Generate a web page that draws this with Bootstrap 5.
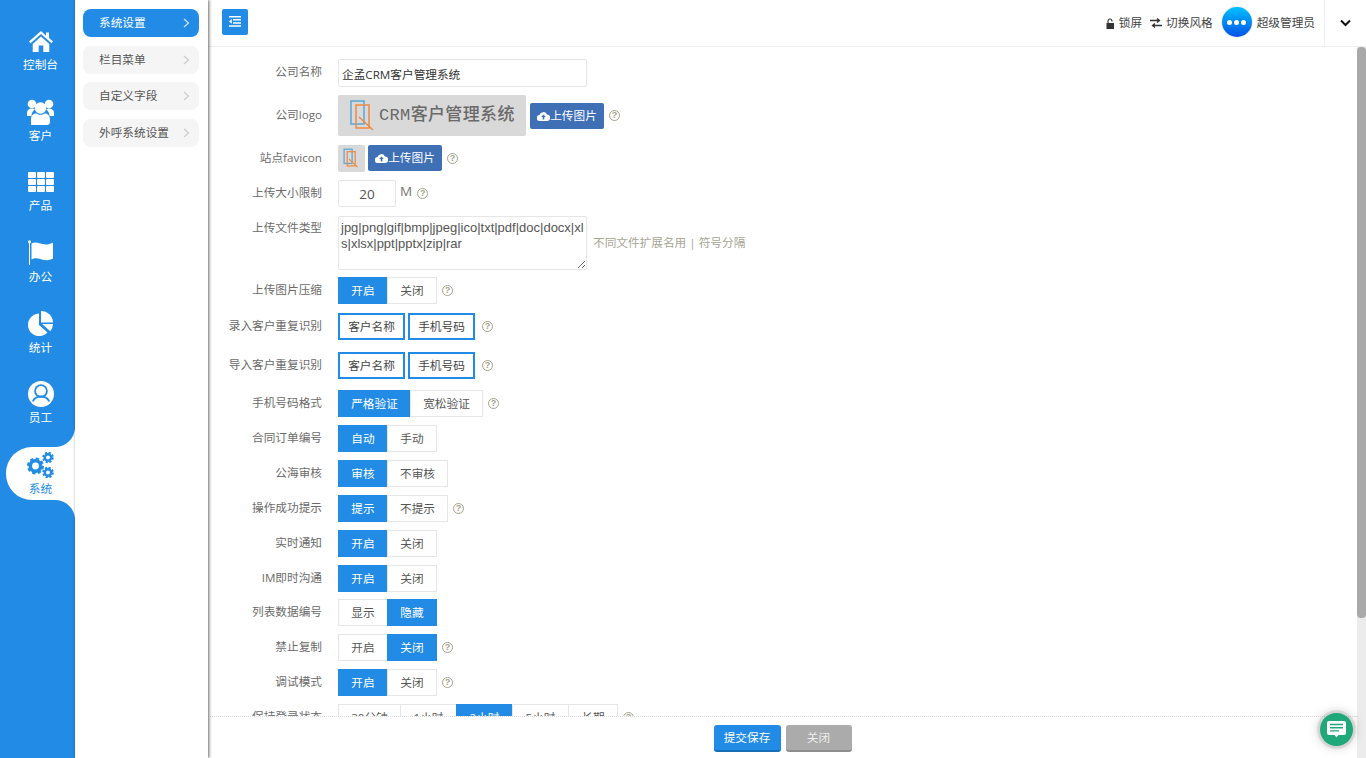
<!DOCTYPE html>
<html lang="zh-CN">
<head>
<meta charset="utf-8">
<title>系统设置</title>
<link href="https://cdn.jsdelivr.net/npm/bootstrap@5.3.0/dist/css/bootstrap.min.css" rel="stylesheet">
<style>
html,body{height:100%;margin:0;overflow:hidden}
body{font-family:"Open Sans","Noto Sans CJK SC",sans-serif;font-size:11.67px;color:#555;background:#fff}
.shell{height:758px}
.rail{width:75px;flex:none;background:#228be6;padding-top:25px}
.rail-item{position:relative;height:50px;margin-bottom:20.67px;margin-left:6px;color:#fff;text-decoration:none;line-height:16px}
.rail-item svg{display:block;fill:#fff}
.rail-ico{height:32px}
.rail-on{background:#fff;color:#228be6;border-radius:26px 0 0 26px;margin-top:-2px;padding-top:2px;height:53px;margin-bottom:0}
.rail-on svg{fill:#228be6}
.rail-on::before,.rail-on::after{content:"";position:absolute;right:0;width:20px;height:20px}
.rail-on::before{top:-20px;background:radial-gradient(circle at 0 0,#228be6 19.5px,#fff 20.5px)}
.rail-on::after{bottom:-20px;background:radial-gradient(circle at 0 100%,#228be6 19.5px,#fff 20.5px)}
.sub{width:133px;flex:none;background:#fff;padding:9px 9px 0 8px;box-shadow:1px 0 3px rgba(0,0,0,.6);position:relative;z-index:3}
.sub-item{height:28px;margin-bottom:8.5px;border-radius:8px;background:#f5f5f5;color:#555;padding:0 9px 0 16px;text-decoration:none}
.sub-on{background:#228be6;color:#fff}
.work{min-width:0;position:relative}
.topbar{height:47px;flex:none;border-bottom:1px solid #eee;padding-left:14px;color:#444}
.tog{width:26px;height:26px;background:#228be6;border-radius:2px;margin-bottom:3px}
.who{width:30px;height:30px;border-radius:50%;background:linear-gradient(#00c0ff,#0052e8);box-shadow:0 0 2px rgba(0,0,0,.25);margin:0 0 2px 9px;gap:2px}
.who i{width:5px;height:5px;border-radius:50%;background:#fff;display:block}
.who-name{margin:0 9px 0 5px}
.swap{margin:0 4px 0 8px}
.lock{margin-right:4px}
.caret-cell{width:42px;height:46px;border-left:1px solid #f0f0f0}
.body-wrap{flex:1;min-height:0}
.scroller{overflow:hidden;flex:1;min-width:0;padding-top:12px}
.sbar{width:9px;flex:none;background:#ececec}
.sthumb{height:571px;background:#a9a9a9;border-radius:4px}
.frm{height:790px}
.frow{margin-bottom:8px}
.m7{margin-bottom:7px}.m9{margin-bottom:9px}.m11{margin-bottom:11px}.m12{margin-bottom:12px}
.lab{width:114px;flex:none;text-align:right;margin-right:16px;color:#6b6b6b;position:relative;top:-1px;white-space:nowrap}
.lab-top{align-self:flex-start;top:3px}
.fld{border:1px solid #e6e6e6;border-radius:2px;height:28px;font-size:11.67px;color:#333;padding:0 3px;background:#fff;outline:none;font-family:inherit}
.fld-name{width:249px}
.fld-num{width:58px;height:27px;text-align:center;font-size:13.5px;color:#555}
.fld-area{width:249px;height:54px;padding:3px 2px;line-height:16px;font-family:"Liberation Sans",sans-serif;font-size:13px;resize:vertical;word-break:break-all;color:#555;display:block}
.unit{font-size:13.5px;color:#777;margin-left:4px;position:relative;top:-2px}
.tip{width:11px;height:11px;border:1px solid #a3a38c;border-radius:50%;color:#a3a38c;font-size:9px;line-height:9px;text-align:center;flex:none;margin-left:5px;font-family:"Liberation Sans",sans-serif;font-weight:700}
.tip-chk{margin-left:4px}
.hint{color:#a5a594;margin-left:6px}
.logo-box{width:188px;height:41px;background:#d9d9d9;border-radius:2px;color:#6a6a6a;font-weight:500;font-size:17px;letter-spacing:.35px;padding-left:12px;font-family:"Liberation Mono","Noto Sans CJK SC",monospace}
.logo-ico{margin-right:3px;flex:none}
.fav-box{width:27px;height:27px;background:#d9d9d9;border-radius:2px}
.up{background:#3f70b6;color:#fff;border-radius:2px;height:26px;width:74px;font-size:11.67px;margin-left:4px;padding:0;border:0}
.up-fav{margin-left:3px;margin-bottom:1px}
.seg{height:27px;font-size:11.67px;line-height:25px;border:1px solid #e6e6e6;border-radius:0!important;color:#555;background:#fff;flex:none!important;padding:0}
.seg-on{background:#228be6;border-color:#228be6;color:#fff}
.seg:hover{background:#fff;color:#555;border-color:#e6e6e6}
.seg-on:hover{background:#228be6;color:#fff;border-color:#228be6}
.w50{width:50px}.w61{width:61px}.w73{width:73px}.w63{width:63px}.w57{width:57px}
.chk{height:27px;width:67px;line-height:23px;border:2px solid #228be6;color:#444;background:#fff;text-align:center;margin-right:3px}
.foot{position:absolute;left:2px;right:11px;bottom:0;height:42px;background:#fff;border-top:1px dotted #ddd;z-index:2;gap:5px;padding-top:2px}
.foot-line{position:absolute;right:-2px;top:-1px;width:2px;border-top:1px dotted #ddd}
.act{height:27px;width:67px;padding:0;font-size:11.67px;line-height:24px;border:0;border-bottom:2px solid #176fb8;background:#228be6;color:#fff;border-radius:3px}
.act-off{width:66px;background:#ababab;border-bottom-color:#8e8e8e;color:#eee}
.chat{position:fixed;left:1320px;top:713px;width:33px;height:33px;border-radius:50%;background:#1fa97a;box-shadow:0 0 0 3px rgba(0,0,0,.08),0 0 12px rgba(0,0,0,.28);z-index:5}
</style>
</head>
<body>
<div class="shell d-flex">
  <nav class="rail d-flex flex-column">
    <a class="rail-item d-flex flex-column align-items-center" href="#"><div class="rail-ico d-flex align-items-center"><svg width="24" height="21" viewBox="0 0 24 21"><path d="M12 0 0 10.600l1.500 1.700L12 3l10.500 9.300 1.500-1.700-4-3.500V1.500h-3v3.300z"/><path d="M3.700 13 12 5.500l8.300 7.500v8h-6v-6.500H9.700V21h-6z"/></svg></div>控制台</a>
    <a class="rail-item d-flex flex-column align-items-center" href="#"><div class="rail-ico d-flex align-items-center"><svg width="27" height="26" viewBox="0 0 27 26"><circle cx="5" cy="5" r="4.300"/><circle cx="22" cy="5" r="4.300"/><path d="M0 17v-3c0-3 2-4.500 5-4.500 1.200 0 2 .3 2.800 1-2 1.500-3.300 3.500-3.300 6.500zM27 17v-3c0-3-2-4.500-5-4.500-1.200 0-2 .3-2.800 1 2 1.500 3.300 3.500 3.300 6.500z"/><circle cx="13.500" cy="9" r="5.800"/><path d="M4 26v-6c0-3.500 2.500-5.500 5.500-5.500 1.200 1 2.500 1.300 4 1.300s2.800-.3 4-1.300c3 0 5.500 2 5.500 5.500v3c0 2-1 3-3 3z"/></svg></div>客户</a>
    <a class="rail-item d-flex flex-column align-items-center" href="#"><div class="rail-ico d-flex align-items-center"><svg width="26" height="20" viewBox="0 0 26 20"><rect width="8" height="6" rx="1"/><rect x="9" width="8" height="6" rx="1"/><rect x="18" width="8" height="6" rx="1"/><rect y="7" width="8" height="6" rx="1"/><rect x="9" y="7" width="8" height="6" rx="1"/><rect x="18" y="7" width="8" height="6" rx="1"/><rect y="14" width="8" height="6" rx="1"/><rect x="9" y="14" width="8" height="6" rx="1"/><rect x="18" y="14" width="8" height="6" rx="1"/></svg></div>产品</a>
    <a class="rail-item d-flex flex-column align-items-center" href="#"><div class="rail-ico d-flex align-items-center"><svg width="25" height="25" viewBox="0 0 25 25"><circle cx="1.500" cy="1.800" r="1.500"/><rect x="1" y="2" width="1" height="23"/><path d="M3.500 3.500C10 0 15 8 25 2.500v16C16 23.500 10 15 3.500 19.500z"/></svg></div>办公</a>
    <a class="rail-item d-flex flex-column align-items-center" href="#"><div class="rail-ico d-flex align-items-center"><svg width="25" height="25" viewBox="0 0 25 25"><path d="M11 2.500A11.300 11.300 0 1 0 19.500 21.500L11 14z"/><path d="M13 0a11.800 11.800 0 0 1 12 11.500H13z"/><path d="M14.200 13H25a12 12 0 0 1-2.700 7.300z"/></svg></div>统计</a>
    <a class="rail-item d-flex flex-column align-items-center" href="#"><div class="rail-ico d-flex align-items-center"><svg width="26" height="26" viewBox="0 0 26 26"><circle cx="13" cy="13" r="13"/><circle cx="13" cy="10" r="6.800" fill="#228be6"/><circle cx="13" cy="10" r="5"/><path d="M4.800 20.500c1.500-3.500 4.500-5 8.200-5s6.700 1.500 8.200 5" fill="none" stroke="#228be6" stroke-width="1.800"/></svg></div>员工</a>
    <a class="rail-item rail-on d-flex flex-column align-items-center" href="#"><div class="rail-ico d-flex align-items-center"><svg width="27" height="26" viewBox="0 0 27 26"><g fill="none" stroke="#228be6"><circle cx="8.500" cy="14" r="5.200" stroke-width="3.600"/><circle cx="8.500" cy="14" r="7.200" stroke-width="2.600" stroke-dasharray="3.300 2.350"/><circle cx="21" cy="5.500" r="3.200" stroke-width="2.400"/><circle cx="21" cy="5.500" r="4.800" stroke-width="2" stroke-dasharray="2.200 1.570"/><circle cx="21" cy="20.500" r="3.200" stroke-width="2.400"/><circle cx="21" cy="20.500" r="4.800" stroke-width="2" stroke-dasharray="2.200 1.570"/></g></svg></div>系统</a>
  </nav>

  <aside class="sub d-flex flex-column">
    <a class="sub-item sub-on d-flex align-items-center justify-content-between" href="#">系统设置<svg width="7" height="10" viewBox="0 0 7 10"><path d="M1 1l4.500 4L1 9" fill="none" stroke="#d5e8fa" stroke-width="1.200"/></svg></a>
    <a class="sub-item d-flex align-items-center justify-content-between" href="#">栏目菜单<svg width="7" height="10" viewBox="0 0 7 10"><path d="M1 1l4.500 4L1 9" fill="none" stroke="#ccc" stroke-width="1.200"/></svg></a>
    <a class="sub-item d-flex align-items-center justify-content-between" href="#">自定义字段<svg width="7" height="10" viewBox="0 0 7 10"><path d="M1 1l4.500 4L1 9" fill="none" stroke="#ccc" stroke-width="1.200"/></svg></a>
    <a class="sub-item d-flex align-items-center justify-content-between" href="#">外呼系统设置<svg width="7" height="10" viewBox="0 0 7 10"><path d="M1 1l4.500 4L1 9" fill="none" stroke="#ccc" stroke-width="1.200"/></svg></a>
  </aside>

  <main class="work flex-grow-1 d-flex flex-column">
    <header class="topbar d-flex align-items-center justify-content-between">
      <button class="tog btn p-0 d-flex align-items-center justify-content-center" type="button"><svg width="14" height="11" viewBox="0 0 14 11"><path d="M1 0h12v1.500H1zM5 3h8v1.500H5zM5 6.200h8v1.500H5zM1 9.300h12v1.500H1zM3.800 3.100v4.600L1 5.400z" fill="#fff"/></svg></button>
      <div class="d-flex align-items-center">
        <svg width="9" height="11" viewBox="0 0 9 11" class="lock"><path d="M1.500 5V3a2.500 2.500 0 0 1 5 0v.5H5.400V3a1.400 1.400 0 0 0-2.800 0v2z M.5 5H8v6H.5z" fill="#333"/></svg>
        <span>锁屏</span>
        <svg width="12" height="10" viewBox="0 0 12 10" class="swap"><path d="M0 2.500h9M7 .5l2.500 2-2.500 2M12 7.500H3M5 5.500l-2.500 2 2.500 2" fill="none" stroke="#333" stroke-width="1.300"/></svg>
        <span>切换风格</span>
        <div class="who d-flex align-items-center justify-content-center"><i></i><i></i><i></i></div>
        <span class="who-name">超级管理员</span>
        <div class="caret-cell d-flex align-items-center justify-content-center"><svg width="11" height="8" viewBox="0 0 11 8"><path d="M1 1.500l4.500 4.500L10 1.500" fill="none" stroke="#111" stroke-width="2"/></svg></div>
      </div>
    </header>

    <div class="body-wrap d-flex">
    <div class="scroller">
      <form class="frm">
        <div class="frow d-flex align-items-center"><label class="lab">公司名称</label><input class="fld fld-name" value="企孟CRM客户管理系统"></div>
        <div class="frow d-flex align-items-center m9"><label class="lab">公司logo</label>
          <div class="logo-box d-flex align-items-center"><svg width="26" height="34" viewBox="0 0 26 34" class="logo-ico"><rect x="1" y="2" width="13" height="23" fill="none" stroke="#5aa6d6" stroke-width="1.500"/><rect x="6" y="6" width="13" height="23" fill="none" stroke="#ee8a45" stroke-width="1.500"/><path d="M9 18l14 13" stroke="#ee8a45" stroke-width="1.500"/></svg><span>CRM客户管理系统</span></div>
          <button class="up btn d-flex align-items-center justify-content-center" type="button"><svg width="13" height="10" viewBox="0 0 13 10"><path d="M3 10a3 3 0 0 1-.5-6A4 4 0 0 1 10 3.500 3.200 3.200 0 0 1 10 10z" fill="#fff"/><path d="M6.500 3.500 4.200 6H5.700v2.500h1.600V6h1.500z" fill="#3f70b6"/></svg>上传图片</button><span class="tip">?</span></div>
        <div class="frow d-flex align-items-center"><label class="lab">站点favicon</label>
          <div class="fav-box d-flex align-items-center justify-content-center"><svg width="17" height="21" viewBox="0 0 26 34"><rect x="1" y="2" width="13" height="23" fill="none" stroke="#5aa6d6" stroke-width="2"/><rect x="6" y="6" width="13" height="23" fill="none" stroke="#ee8a45" stroke-width="2"/><path d="M9 18l14 13" stroke="#ee8a45" stroke-width="2"/></svg></div>
          <button class="up up-fav btn d-flex align-items-center justify-content-center" type="button"><svg width="13" height="10" viewBox="0 0 13 10"><path d="M3 10a3 3 0 0 1-.5-6A4 4 0 0 1 10 3.500 3.200 3.200 0 0 1 10 10z" fill="#fff"/><path d="M6.500 3.500 4.200 6H5.700v2.500h1.600V6h1.500z" fill="#3f70b6"/></svg>上传图片</button><span class="tip">?</span></div>
        <div class="frow d-flex align-items-center m9"><label class="lab">上传大小限制</label><input class="fld fld-num" value="20"><span class="unit">M</span><span class="tip">?</span></div>
        <div class="frow d-flex align-items-center m7"><label class="lab lab-top">上传文件类型</label><textarea class="fld fld-area">jpg|png|gif|bmp|jpeg|ico|txt|pdf|doc|docx|xls|xlsx|ppt|pptx|zip|rar</textarea><span class="hint">不同文件扩展名用 | 符号分隔</span></div>
        <div class="frow d-flex align-items-center m9"><label class="lab">上传图片压缩</label><div class="btn-group"><a class="btn seg seg-on w50">开启</a><a class="btn seg w50">关闭</a></div><span class="tip">?</span></div>
        <div class="frow d-flex align-items-center m12"><label class="lab">录入客户重复识别</label><div class="chk">客户名称</div><div class="chk">手机号码</div><span class="tip tip-chk">?</span></div>
        <div class="frow d-flex align-items-center m11"><label class="lab">导入客户重复识别</label><div class="chk">客户名称</div><div class="chk">手机号码</div><span class="tip tip-chk">?</span></div>
        <div class="frow d-flex align-items-center"><label class="lab">手机号码格式</label><div class="btn-group"><a class="btn seg seg-on w73">严格验证</a><a class="btn seg w73">宽松验证</a></div><span class="tip">?</span></div>
        <div class="frow d-flex align-items-center"><label class="lab">合同订单编号</label><div class="btn-group"><a class="btn seg seg-on w50">自动</a><a class="btn seg w50">手动</a></div></div>
        <div class="frow d-flex align-items-center"><label class="lab">公海审核</label><div class="btn-group"><a class="btn seg seg-on w50">审核</a><a class="btn seg w61">不审核</a></div></div>
        <div class="frow d-flex align-items-center"><label class="lab">操作成功提示</label><div class="btn-group"><a class="btn seg seg-on w50">提示</a><a class="btn seg w61">不提示</a></div><span class="tip">?</span></div>
        <div class="frow d-flex align-items-center"><label class="lab">实时通知</label><div class="btn-group"><a class="btn seg seg-on w50">开启</a><a class="btn seg w50">关闭</a></div></div>
        <div class="frow d-flex align-items-center m7"><label class="lab">IM即时沟通</label><div class="btn-group"><a class="btn seg seg-on w50">开启</a><a class="btn seg w50">关闭</a></div></div>
        <div class="frow d-flex align-items-center"><label class="lab">列表数据编号</label><div class="btn-group"><a class="btn seg w50">显示</a><a class="btn seg seg-on w50">隐藏</a></div></div>
        <div class="frow d-flex align-items-center"><label class="lab">禁止复制</label><div class="btn-group"><a class="btn seg w50">开启</a><a class="btn seg seg-on w50">关闭</a></div><span class="tip">?</span></div>
        <div class="frow d-flex align-items-center"><label class="lab">调试模式</label><div class="btn-group"><a class="btn seg seg-on w50">开启</a><a class="btn seg w50">关闭</a></div><span class="tip">?</span></div>
        <div class="frow d-flex align-items-center"><label class="lab">保持登录状态</label><div class="btn-group"><a class="btn seg w63">30分钟</a><a class="btn seg w57">1小时</a><a class="btn seg seg-on w57">2小时</a><a class="btn seg w57">5小时</a><a class="btn seg w50">长期</a></div><span class="tip">?</span></div>
      </form>
    </div>
    <div class="sbar"><div class="sthumb"></div></div>
    </div>

    <footer class="foot d-flex align-items-center justify-content-center">
      <span class="foot-line"></span>
      <button class="act btn" type="button">提交保存</button>
      <button class="act act-off btn" type="button">关闭</button>
    </footer>
  </main>
</div>
<div class="chat d-flex align-items-center justify-content-center"><svg width="19" height="17" viewBox="0 0 19 17"><path d="M2 0h15a2 2 0 0 1 2 2v10a2 2 0 0 1-2 2h-5.500L9.500 16.500 7.500 14H2a2 2 0 0 1-2-2V2a2 2 0 0 1 2-2z" fill="#fff"/><path d="M3 3.500h13M3 6.700h13M3 9.900h9" stroke="#1fa97a" stroke-width="1.400"/></svg></div>
<script src="https://cdn.jsdelivr.net/npm/bootstrap@5.3.0/dist/js/bootstrap.bundle.min.js"></script>
</body>
</html>
